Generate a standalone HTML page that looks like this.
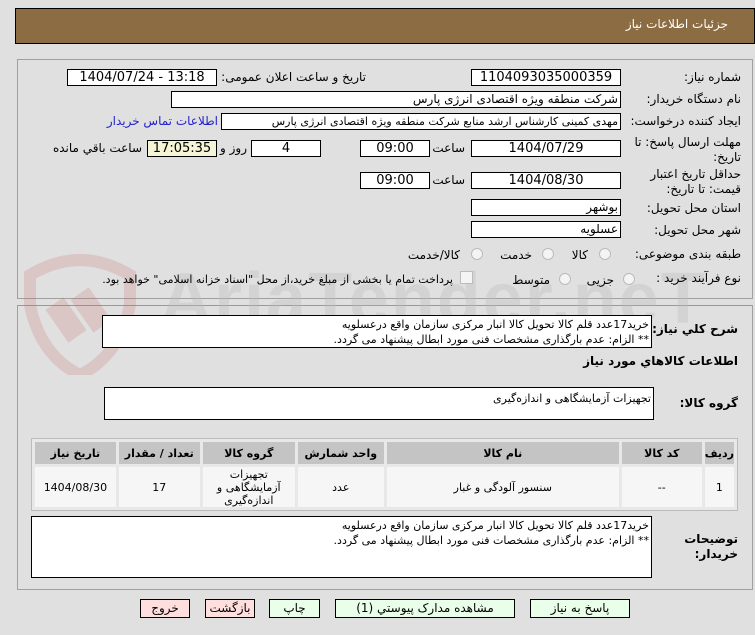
<!DOCTYPE html>
<html><head><meta charset="utf-8"><style>
*{box-sizing:border-box;margin:0;padding:0}
body{width:755px;height:635px;background:#e0e0e0;font-family:Tahoma,"DejaVu Sans","Liberation Sans",sans-serif;font-size:12px;color:#000;position:relative;overflow:hidden}
.a{position:absolute;white-space:nowrap}
.box{position:absolute;background:#fff;border:1px solid #000;height:17px;line-height:15px;font-size:12px;padding:0 2px;direction:rtl;white-space:nowrap;overflow:hidden}
.c{text-align:center;direction:ltr;font-size:13px}
.l{position:absolute;direction:rtl;text-align:right;white-space:nowrap;font-size:12px}
.ta{position:absolute;background:#fff;border:1px solid #000;direction:rtl;text-align:right;font-size:11px;line-height:15px;padding:1px 2px}
.rad{position:absolute;width:12px;height:12px;border-radius:50%;border:1px solid #bbb;background:#f4f4f4}
.btn{position:absolute;top:599px;height:19px;border:1px solid #000;text-align:center;font-size:12px;line-height:17px}
table{position:absolute;left:31px;top:438px;width:707px;border:1px solid #bbb;background:#e8e8e8;border-spacing:3px;direction:rtl}
th{background:#c4c4c4;height:22px;font-size:11px;font-weight:bold}
td{background:#f6f6f6;height:40px;text-align:center;font-size:11px;line-height:13px}
</style></head><body>
<div class="a" style="left:15px;top:8px;width:740px;height:36px;background:#8c6c42;border:1px solid #000"></div>
<div class="l" style="right:27px;top:17px;color:#fff;font-size:12px">جزئیات اطلاعات نیاز</div>

<div class="a" style="left:17px;top:59px;width:736px;height:240px;border:1px solid #a0a0a0"></div>
<div class="a" style="left:17px;top:305px;width:736px;height:285px;border:1px solid #a0a0a0;border-top:1px solid #999"></div>

<svg class="a" style="left:20px;top:245px;opacity:.2" width="130" height="130" viewBox="0 0 130 130"><path d="M10 30 Q60 0 110 30 L110 60 Q100 110 60 130 Q20 110 10 60Z" fill="none" stroke="#c86060" stroke-width="12"/><rect x="35" y="55" width="22" height="40" fill="#c86060" transform="rotate(-35 46 75)"/><rect x="60" y="45" width="22" height="40" fill="#c86060" transform="rotate(-35 71 65)"/></svg>
<div class="a" style="left:160px;top:258px;font-size:72px;font-weight:bold;color:#bdbdbd;opacity:.35;font-family:'Liberation Sans',sans-serif;letter-spacing:2px">AriaTender.neT</div>

<div class="l" style="right:14px;top:70px">شماره نیاز:</div>
<div class="box c" style="left:471px;top:69px;width:150px">1104093035000359</div>
<div class="l" style="right:389px;top:70px">تاریخ و ساعت اعلان عمومی:</div>
<div class="box c" style="left:67px;top:69px;width:150px">1404/07/24 - 13:18</div>

<div class="l" style="right:14px;top:92px">نام دستگاه خریدار:</div>
<div class="box" style="left:171px;top:91px;width:450px">شرکت منطقه ویژه اقتصادی انرژی پارس</div>

<div class="l" style="right:14px;top:114px">ایجاد کننده درخواست:</div>
<div class="box" style="left:221px;top:113px;width:400px;font-size:11px">مهدی کمینی کارشناس ارشد منابع شرکت منطقه ویژه اقتصادی انرژی پارس</div>
<div class="l" style="right:537px;top:114px;color:#2222cc">اطلاعات تماس خریدار</div>

<div class="l" style="right:14px;top:135px;line-height:15px">مهلت ارسال پاسخ: تا<br>تاریخ:</div>
<div class="box c" style="left:471px;top:140px;width:150px">1404/07/29</div>
<div class="l" style="right:290px;top:141px">ساعت</div>
<div class="box c" style="left:360px;top:140px;width:70px">09:00</div>
<div class="box c" style="left:251px;top:140px;width:70px">4</div>
<div class="l" style="right:508px;top:141px">روز و</div>
<div class="box c" style="left:147px;top:140px;width:70px;background:#f5f5d5">17:05:35</div>
<div class="l" style="right:613px;top:141px">ساعت باقي مانده</div>

<div class="l" style="right:14px;top:167px;line-height:15px">حداقل تاریخ اعتبار<br>قیمت: تا تاریخ:</div>
<div class="box c" style="left:471px;top:172px;width:150px">1404/08/30</div>
<div class="l" style="right:290px;top:173px">ساعت</div>
<div class="box c" style="left:360px;top:172px;width:70px">09:00</div>

<div class="l" style="right:14px;top:201px">استان محل تحویل:</div>
<div class="box" style="left:471px;top:199px;width:150px">بوشهر</div>
<div class="l" style="right:14px;top:223px">شهر محل تحویل:</div>
<div class="box" style="left:471px;top:221px;width:150px">عسلویه</div>

<div class="l" style="right:14px;top:247px">طبقه بندی موضوعی:</div>
<div class="rad" style="left:599px;top:248px"></div><div class="l" style="right:167px;top:248px">کالا</div>
<div class="rad" style="left:542px;top:248px"></div><div class="l" style="right:223px;top:248px">خدمت</div>
<div class="rad" style="left:471px;top:248px"></div><div class="l" style="right:295px;top:248px">کالا/خدمت</div>

<div class="l" style="right:14px;top:271px">نوع فرآیند خرید :</div>
<div class="rad" style="left:623px;top:273px"></div><div class="l" style="right:141px;top:273px">جزیی</div>
<div class="rad" style="left:559px;top:273px"></div><div class="l" style="right:205px;top:273px">متوسط</div>
<div class="a" style="left:460px;top:271px;width:13px;height:13px;border:1px solid #bbb;background:#f4f4f4"></div>
<div class="l" style="right:302px;top:273px;font-size:11px">پرداخت تمام یا بخشی از مبلغ خرید،از محل "اسناد خزانه اسلامی" خواهد بود.</div>

<div class="l" style="right:17px;top:322px;font-weight:bold">شرح کلي نياز:</div>
<div class="ta" style="left:102px;top:315px;width:550px;height:33px">خرید17عدد قلم کالا تحویل کالا انبار مرکزی سازمان  واقع درعسلویه<br>** الزام: عدم بارگذاری مشخصات فنی مورد ابطال پیشنهاد می گردد.</div>
<div class="l" style="right:17px;top:354px;font-weight:bold">اطلاعات کالاهاي مورد نياز</div>
<div class="l" style="right:17px;top:396px;font-weight:bold">گروه کالا:</div>
<div class="ta" style="left:104px;top:387px;width:550px;height:33px;padding-top:3px">تجهیزات آزمایشگاهی و اندازه‌گیری</div>

<table>
<tr><th style="width:27px">رديف</th><th style="width:80px">کد کالا</th><th style="width:232px">نام کالا</th><th style="width:86px">واحد شمارش</th><th style="width:92px">گروه کالا</th><th style="width:81px">تعداد / مقدار</th><th>تاريخ نياز</th></tr>
<tr><td>1</td><td>--</td><td>سنسور آلودگی و غبار</td><td>عدد</td><td>تجهیزات<br>آزمایشگاهی و<br>اندازه‌گیری</td><td>17</td><td>1404/08/30</td></tr>
</table>

<div class="l" style="right:17px;top:532px;font-weight:bold;line-height:15px">توضیحات<br>خریدار:</div>
<div class="ta" style="left:31px;top:516px;width:621px;height:62px">خرید17عدد قلم کالا تحویل کالا انبار مرکزی سازمان  واقع درعسلویه<br>** الزام: عدم بارگذاری مشخصات فنی مورد ابطال پیشنهاد می گردد.</div>

<div class="btn" style="left:140px;width:50px;background:#ffdede">خروج</div>
<div class="btn" style="left:205px;width:50px;background:#ffdede">بازگشت</div>
<div class="btn" style="left:269px;width:51px;background:#eaffea">چاپ</div>
<div class="btn" style="left:335px;width:180px;background:#eaffea">مشاهده مدارک پیوستي (1)</div>
<div class="btn" style="left:530px;width:100px;background:#eaffea">پاسخ به نياز</div>
</body></html>
